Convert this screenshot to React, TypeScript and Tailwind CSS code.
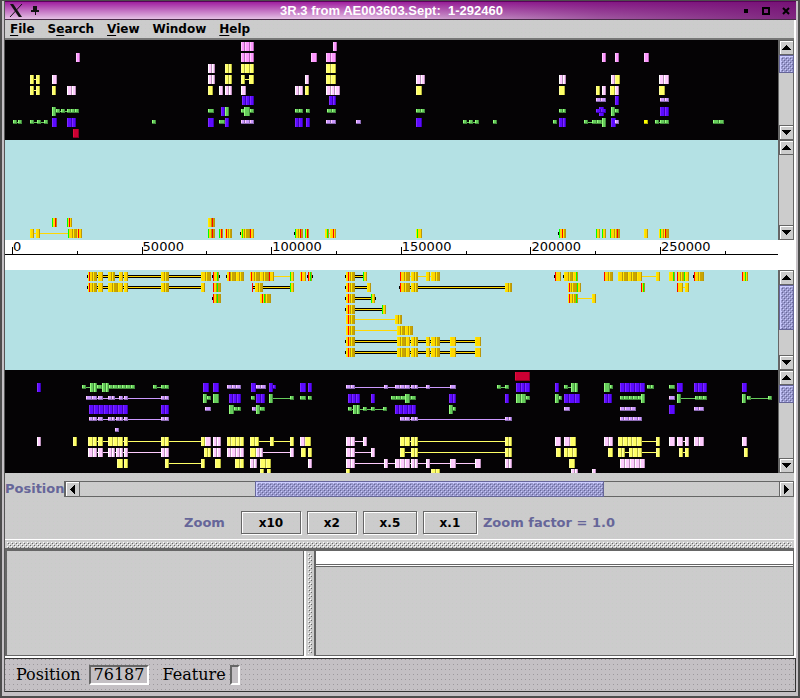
import React from "react";

type Tone = { base: string; light: string; dark: string; tail?: string };

const TONES: Record<string, Tone> = {
  h: { base: "#ff99ff", light: "#ffccff", dark: "#b566b5" },
  p: { base: "#ffccff", light: "#ffffff", dark: "#b98fb9" },
  y: { base: "#ffff66", light: "#ffff99", dark: "#b3b33c" },
  n: { base: "#66cc5c", light: "#99ff80", dark: "#438c3c" },
  v: { base: "#5c0aff", light: "#7f2bff", dark: "#3c00b8" },
  l: { base: "#cc99ff", light: "#ffccff", dark: "#8c6bb3" },
  r: { base: "#cc0033", light: "#e0103c", dark: "#8c0024" },
  s: { base: "#ffff00", light: "#ffff00", dark: "#b3b300" },
  o: { base: "#ffd700", light: "#ffee00", dark: "#b8960b", tail: "#c9a400" },
};

/*
 * A row is [centre y, features]. Feature tokens:
 *   Y30+4   tall exon, tone y        y30+4   short exon
 *   -y30+10 intron line              b97+10  outlined intron line
 *   k87     end marker               !r88    start / stop codon stripe
 */
type Row = [number, string];

const FORWARD_HITS: Row[] = [
  [46, "H241+13 H333+4"],
  [57, "H76+4 H241+13 H311+6 H326+10 H602+4 H615+4 H644+5"],
  [68, "P208+7 Y225+7 Y241+13 Y326+10"],
  [79, "-y30+10 Y30+4 Y36+4 P52+5 P208+7 Y225+7 -y241+13 Y241+4 Y249+5 P305+4 Y326+10 P416+9 P559+7 P611+4 Y615+5 P659+10"],
  [90, "-y30+10 Y30+4 Y36+4 Y52+4 P67+9 Y208+5 P219+4 P225+7 P241+5 P295+8 Y305+4 P326+14 Y416+6 Y559+6 Y596+4 P602+4 Y610+5 P615+4 Y659+6"],
  [100, "V242+12 V329+7 l596+10 V615+4 l660+9"],
  [111, "-n52+26 N52+4 n56+4 n61+4 n67+12 n208+6 V221+4 N225+4 n241+13 N244+6 n295+8 n306+4 n327+9 n416+9 n559+7 V599+5 v596+10 N611+4 n615+4 V660+9"],
  [122, "-n13+8 n13+4 n18+4 -n30+18 n30+4 n37+4 n44+4 V52+5 V67+9 n152+4 V208+6 n219+6 V225+4 l241+13 V295+8 V306+4 l326+10 l356+5 V416+6 -n463+16 n463+4 n469+4 n475+4 n493+4 n553+4 V559+7 -n584+20 n584+4 n592+10 N602+4 V611+5 l615+4 s644+4 -n655+10 n655+4 n660+9 n713+11"],
  [133, "R73+6"],
];

const FORWARD_GENES: Row[] = [
  [222, "O52+5 !g52 !r55 O67+5 !g67 !r69 O208+7 !r212"],
  [233, "-o34+34 O30+4 O36+4 O68+9 !g68 O77+5 !r78 O208+7 !g208 !r212 O219+4 !g219 !r221 O225+7 !r226 k240 O241+13 !g242 !r250 k294 O295+8 !g295 !r300 O305+4 !g305 !r307 -o325+10 O325+4 !g327 O330+6 !r333 O416+6 !g417 k558 O559+7 !g559 !r562 O596+4 !g596 O602+4 !g602 O610+10 !g610 !r617 O644+4 O659+10 !g660 !r665"],
];

const REVERSE_GENES: Row[] = [
  [276, "k87 b97+108 O88+9 !r89 O98+5 O108+7 O119+4 O124+4 O161+8 O201+10 k212 O213+6 !r213 !g217 k219 k226 O227+17 !r229 O250+24 !r251 !r269 -o274+16 O290+4 !g290 O300+6 !r301 k307 O308+4 !r308 !g310 k312 k345 O346+9 !r348 b355+8 O363+4 !g363 -o400+40 O400+10 !r400 O411+7 O426+4 O431+9 k554 O555+6 !r555 k563 O564+14 !g576 O604+9 !r604 O618+24 -o642+14 O656+4 O669+6 !g673 O677+12 !r677 !g684 k693 O694+10 !r694 O742+6 !r742 !g745"],
  [287, "k87 b97+104 O88+9 !r89 O98+5 O108+15 O124+4 O161+8 O201+4 O213+8 !r213 !g217 b253+37 O255+8 !r252 O290+4 !g290 k345 O346+9 !r348 b355+12 O367+4 k399 b410+95 O400+10 !r400 O411+7 O505+7 O568+13 !r569 !g577 O641+4 !r641 !g643 -o677+10 O677+6 !r677 O685+4"],
  [298, "k212 O213+8 !r213 !g217 O260+11 !r262 !g264 k345 O346+9 !r348 b355+16 O371+4 !g371 k375 O568+10 !r569 !g576 -o578+14 O592+4"],
  [309, "k345 O346+9 !r348 b355+27 O382+4 !g382"],
  [319, "O346+9 !r348 -o355+40 O395+7"],
  [330, "O346+9 !r348 -o355+42 O397+8 O405+8"],
  [341, "k345 O346+9 !r348 b355+120 O397+13 O411+7 O426+4 O431+9 O450+6 O475+6"],
  [352, "k345 O346+9 !r348 b355+120 O397+13 O411+7 O426+4 O431+9 O450+6 O475+6"],
];

const REVERSE_HITS: Row[] = [
  [376, "R515+15"],
  [387, "V37+4 -n82+50 n82+4 N90+7 n97+5 N102+7 n109+26 -n153+12 n153+4 n161+8 V203+6 V213+6 l227+14 V251+5 l256+10 V269+4 v273+3 V300+6 V308+4 -l346+109 l346+9 l384+4 l395+15 l411+7 l426+4 l450+6 -n497+10 n497+4 n505+4 V516+14 V555+4 -n564+8 n564+4 N571+7 N604+6 n610+3 V620+25 n647+7 n669+6 V677+6 V694+13 V742+5"],
  [398, "-l86+80 l86+11 l98+5 l108+7 l119+4 l124+4 l161+8 N203+4 n207+4 N213+6 V229+12 n251+4 V256+9 -n273+18 N269+4 n290+4 n300+6 n308+4 V348+12 V371+4 n391+25 N405+5 V449+7 V505+4 N516+10 n526+4 N555+4 n559+3 V564+16 V604+8 n620+22 N641+4 l669+6 -n681+16 N677+4 n695+12 -n747+22 N742+4 n747+4 n768+4"],
  [409, "V89+39 V161+8 l205+6 N229+5 n234+7 l252+4 N256+4 n260+5 -n348+37 n348+4 N353+7 n363+4 n371+4 n383+4 V395+21 N449+4 n453+3 l564+6 l620+16 V669+6 l694+10"],
  [419, "-l89+74 l89+8 l98+5 l108+7 l116+7 l124+4 l161+8 -l400+106 l400+10 l411+7 l505+7 l620+22"],
  [430, "l115+4"],
  [441, "P37+4 Y73+4 -y88+115 Y88+9 Y98+5 Y108+15 Y124+4 Y161+8 Y201+4 P205+6 P213+8 Y227+17 -y255+36 Y250+9 Y270+4 Y290+4 P300+5 Y305+6 -p355+10 P346+9 P363+4 -y400+106 Y400+10 Y411+7 Y505+7 P555+6 P564+6 Y570+6 P604+9 -y640+18 Y618+24 Y656+4 P669+6 -p677+10 P677+6 P685+4 P694+10 P742+5"],
  [452, "-p88+74 P88+9 P98+5 P108+7 P116+7 P124+4 P161+8 Y204+7 P213+8 P227+17 -p256+36 Y250+6 P256+7 P290+4 Y301+5 Y308+4 -p355+18 P346+9 P371+4 -y400+106 Y400+5 Y411+7 Y505+7 Y556+5 Y564+13 Y608+5 -y618+40 Y618+7 Y629+13 Y656+4 -y679+8 Y679+4 Y685+4 Y744+4"],
  [463, "Y117+6 Y124+4 -y165+38 Y165+4 Y201+4 Y215+6 Y235+9 P250+7 Y260+11 P308+4 -p346+132 P346+9 P384+4 P395+15 P411+7 P426+4 P450+6 P475+6 P505+7 Y569+6 P620+25"],
  [473, "Y260+4 Y267+4 Y346+4 Y431+9 P571+7 P592+4"],
];

function Exon({ x, y, w, h, tone }: { x: number; y: number; w: number; h: number; tone: Tone }) {
  const parts = tone === TONES.r ? 1 : Math.max(1, Math.round(w / 4.6));
  const cuts = Array.from({ length: parts + 1 }, (_, i) => x + Math.round((w * i) / parts));
  return (
    <g>
      <rect x={x} y={y} width={w} height={h} fill={tone.base} />
      {cuts.slice(0, -1).map((left, i) => (
        <g key={left}>
          {tone.tail && i % 2 === 1 && (
            <rect x={left} y={y} width={cuts[i + 1] - left} height={h} fill={tone.tail} />
          )}
          <rect x={left} y={y} width={1} height={h} fill={tone.light} />
          <rect x={cuts[i + 1] - 1} y={y} width={1} height={h} fill={tone.dark} />
        </g>
      ))}
      {(h < 6 || tone === TONES.r) && <rect x={x} y={y + h - 1} width={w} height={1} fill={tone.dark} />}
    </g>
  );
}

function Feature({ token, cy }: { token: string; cy: number }) {
  const match = /^([-!]?)([a-zA-Z])(\d+)(?:\+(\d+))?$/.exec(token);
  if (!match) return null;
  const [, prefix, letter, xs, ws] = match;
  const x = Number(xs);
  const w = Number(ws ?? 1);
  if (prefix === "!") {
    return <rect x={x} y={cy - 4} width={1} height={9} fill={letter === "r" ? "#ff0000" : "#00ff00"} />;
  }
  if (prefix === "-") {
    return <rect x={x} y={cy} width={w} height={1} fill={TONES[letter].base} />;
  }
  if (letter === "k") return <rect x={x} y={cy - 1} width={1} height={3} fill="#000" />;
  if (letter === "b") {
    return (
      <g>
        <rect x={x} y={cy - 1} width={w} height={3} fill="#000" />
        <rect x={x} y={cy} width={w} height={1} fill="#ffd700" />
      </g>
    );
  }
  const tall = letter === letter.toUpperCase();
  const h = tall ? 9 : 4;
  return <Exon x={x} y={tall ? cy - 4 : cy - 2} w={w} h={h} tone={TONES[letter.toLowerCase()]} />;
}

function Arrow({ dir }: { dir: "up" | "down" | "left" | "right" }) {
  const points = {
    up: "0,7 4,2 5,2 9,7",
    down: "0,2 9,2 5,7 4,7",
    left: "7,0 2,4 2,5 7,9",
    right: "2,0 7,4 7,5 2,9",
  }[dir];
  return (
    <svg viewBox="0 0 9 9" className="size-[9px] shrink-0" shapeRendering="crispEdges" aria-hidden="true">
      <polygon points={points} fill="#000" />
    </svg>
  );
}

const arrowButton =
  "flex size-[15px] shrink-0 items-center justify-center border border-[#666666] bg-[#cccccc] shadow-[inset_1px_1px_0_#ffffff]";
const thumbTexture =
  "border border-[#666699] bg-[#9999cc] bg-[conic-gradient(at_1px_1px,transparent_75%,#ccccff_0),conic-gradient(at_1px_1px,transparent_75%,#666699_0),conic-gradient(at_1px_1px,transparent_75%,#ccccff_0),conic-gradient(at_1px_1px,transparent_75%,#666699_0)] bg-[size:4px_4px] bg-[position:1px_1px,2px_2px,3px_3px,4px_4px] shadow-[inset_1px_1px_0_#ccccff]";

function VerticalScroll({ name, thumb }: { name: string; thumb?: string }) {
  return (
    <div className="flex w-4 shrink-0 flex-col border-l border-[#666666] bg-[#cccccc]">
      <button aria-label={`${name} up`} className={arrowButton}>
        <Arrow dir="up" />
      </button>
      <div className="flex-1 border-r border-[#666666]">
        {thumb && <div className={`${thumb} w-[15px] ${thumbTexture}`} />}
      </div>
      <button aria-label={`${name} down`} className={arrowButton}>
        <Arrow dir="down" />
      </button>
    </div>
  );
}

type TrackProps = { name: string; top: number; height: number; rows: Row[]; look: string; thumb?: string };

function TrackPanel({ name, top, height, rows, look, thumb }: TrackProps) {
  return (
    <section aria-label={name} className="flex">
      <svg
        viewBox={`5 ${top} 773 ${height}`}
        preserveAspectRatio="none"
        shapeRendering="crispEdges"
        className={`min-w-0 flex-1 ${look}`}
      >
        {rows.map(([cy, tokens]) =>
          tokens.split(" ").map((token, i) => <Feature key={`${cy}-${i}`} token={token} cy={cy} />),
        )}
      </svg>
      <VerticalScroll name={name} thumb={thumb} />
    </section>
  );
}

function Ruler() {
  const at = (base: number) => `${((7 + base * 0.002592) / 773) * 100}%`;
  const majors = [0, 50000, 100000, 150000, 200000, 250000];
  return (
    <div className="flex bg-white pr-4">
      <svg className="h-[30px] min-w-0 flex-1" shapeRendering="crispEdges">
        <line x1="0" x2="100%" y1="14.5" y2="14.5" stroke="#000" />
        {majors.map((base) => (
          <g key={base}>
            <rect x={at(base)} y="7" width="1" height="7" />
            <rect x={at(base + 25000)} y="11" width="1" height="3" />
            <text x={at(base)} y="11" dx="1" className="font-['DejaVu_Sans',sans-serif] text-[13px]">
              {base}
            </text>
          </g>
        ))}
      </svg>
    </div>
  );
}

const MENUS = [
  ["", "F", "ile"],
  ["S", "e", "arch"],
  ["", "V", "iew"],
  ["Window", "", ""],
  ["", "H", "elp"],
];

const ZOOMS = [
  { label: "x10", width: "w-[60px]" },
  { label: "x2", width: "w-[50px]" },
  { label: "x.5", width: "w-[54px]" },
  { label: "x.1", width: "w-[54px]" },
];

const dither =
  "bg-[#cccccc] bg-[conic-gradient(at_1px_1px,transparent_75%,#c8cbc8_0),conic-gradient(at_1px_1px,transparent_75%,#d0c8d0_0)] bg-[size:4px_4px,7px_5px]";
const grip =
  "bg-[#cccccc] bg-[conic-gradient(at_1px_1px,transparent_75%,#ffffff_0),conic-gradient(at_1px_1px,transparent_75%,#666666_0),conic-gradient(at_1px_1px,transparent_75%,#ffffff_0),conic-gradient(at_1px_1px,transparent_75%,#666666_0)] bg-[size:4px_4px] bg-[position:0px_0px,1px_1px,2px_2px,3px_3px]";

function TitleBar() {
  return (
    <header className="flex h-[19px] items-center border-b border-t border-b-[#4a2a4a] border-t-[#5c005c] bg-[linear-gradient(to_right,transparent_45%,#72127299_75%,#701070dd),linear-gradient(#a020a0,#e4c0e4)] px-1 text-black">
      <svg viewBox="0 0 14 15" className="h-[15px] w-3.5" aria-hidden="true">
        <path d="M1 1h3.2l8.8 13H9.8z" fill="#111" />
        <path d="M13 1L1 14" stroke="#111" strokeWidth="1" />
      </svg>
      <svg viewBox="0 0 8 9" className="ml-2 h-[9px] w-2" shapeRendering="crispEdges" aria-hidden="true">
        <path d="M2 0h4v4h2v2H5v3H4V6H0V4h2z" fill="#111" />
      </svg>
      <h1 className="flex-1 whitespace-pre pl-1 text-center font-['Liberation_Sans',sans-serif] text-[13px] leading-4 font-bold text-white">
        {"3R.3 from AE003603.Sept:  1-292460"}
      </h1>
      <div className="flex items-center gap-2">
        <button aria-label="Minimize" className="flex size-3 items-center justify-center">
          <span className="size-1 bg-black" />
        </button>
        <button aria-label="Maximize" className="flex size-3 items-center justify-center">
          <span className="size-2 border-2 border-black" />
        </button>
        <button aria-label="Close" className="flex size-3 items-center justify-center">
          <svg viewBox="0 0 8 8" className="size-2">
            <path d="M1 1l6 6M7 1L1 7" stroke="#000" strokeWidth="2" />
          </svg>
        </button>
      </div>
    </header>
  );
}

export default function App() {
  return (
    <div className="border-x-2 border-b-2 border-t border-[#4d4d4d] bg-[#c4c0c4] pb-1 pl-0.5 pr-0.5 font-['DejaVu_Sans',sans-serif] text-xs text-black">
      <div className="border-l border-[#555555]">
        <TitleBar />
        <div className="border-r-2 border-white">
          <nav className={`flex h-5 items-center gap-[13px] border-b-2 border-[#777777] px-[5px] font-bold ${dither}`}>
            {MENUS.map(([before, key, after]) => (
              <button key={before + key} className="leading-4">
                {before}
                <span className="underline underline-offset-2">{key}</span>
                {after}
              </button>
            ))}
          </nav>

          <main>
            <TrackPanel name="Forward hits" top={40} height={100} rows={FORWARD_HITS} look="h-[100px] bg-[#050305]" thumb="h-[18px]" />
            <TrackPanel name="Forward genes" top={140} height={100} rows={FORWARD_GENES} look="h-[100px] bg-[#b4e1e4]" />
            <Ruler />
            <TrackPanel name="Reverse genes" top={270} height={100} rows={REVERSE_GENES} look="h-[100px] bg-[#b4e1e4]" thumb="h-[45px]" />
            <TrackPanel name="Reverse hits" top={370} height={103} rows={REVERSE_HITS} look="h-[103px] bg-[#050305]" thumb="h-[18px]" />
          </main>

          <div className={`border-b border-white ${dither}`}>
            <div className="flex items-center pt-2 text-[13px] leading-4 font-bold text-[#666699]">
              <span className="w-[59px] shrink-0">Position</span>
              <div className="flex h-4 flex-1 items-stretch border border-r-0 border-[#666666]">
                <button aria-label="Scroll left" className={arrowButton + " -my-px h-4"}>
                  <Arrow dir="left" />
                </button>
                <div className="flex flex-1">
                  <div className="w-1/4" />
                  <div className={`-my-px w-1/2 ${thumbTexture}`} />
                </div>
                <button aria-label="Scroll right" className={arrowButton + " -my-px h-4"}>
                  <Arrow dir="right" />
                </button>
              </div>
            </div>
            <div className="flex items-center justify-center gap-1.5 pb-[5px] pt-3.5 text-[13px] font-bold text-[#666699]">
              <span className="mr-2.5">Zoom</span>
              {ZOOMS.map(({ label, width }) => (
                <button
                  key={label}
                  className={`${width} h-[23px] border border-[#666666] text-xs text-black shadow-[inset_1px_1px_0_#ffffff,1px_1px_0_#ffffff]`}
                >
                  {label}
                </button>
              ))}
              <span>Zoom factor = 1.0</span>
            </div>
          </div>

          <div className={`h-2 border-x-2 border-t-2 border-[#cccccc] ${grip}`} />

          <div className="flex h-[110px] border-b-2 border-t-3 border-b-white border-t-[#666666]">
            <div className={`w-[301px] shrink-0 border-l-2 border-r-2 border-l-[#666666] border-r-white ${dither}`}>
              <div className="h-full border-b border-r border-[#666666]" />
            </div>
            <div className={`w-2 shrink-0 border-2 border-[#cccccc] ${grip}`} />
            <div className={`flex-1 border-l-2 border-[#666666] ${dither}`}>
              <div className="flex h-full flex-col border-b border-r border-[#666666]">
                <div className="h-3.5 border-b border-[#666666] bg-white" />
                <div className="h-0.5 border-b border-t border-b-[#666666] border-t-white" />
              </div>
            </div>
          </div>
        </div>

        <footer className="flex h-[34px] items-center border-y border-r border-[#333333] bg-[#c4c0c4] bg-[conic-gradient(at_1px_1px,transparent_75%,#9c989c_0)] bg-[size:4px_5px] pl-[11px] font-['DejaVu_Serif',serif] text-base leading-5">
          <label htmlFor="position">Position</label>
          <input
            id="position"
            readOnly
            value="76187"
            className="ml-2 h-5 w-[60px] border-2 border-b-white border-l-[#666666] border-r-white border-t-[#666666] bg-[#c4c0c4] px-[3px]"
          />
          <label htmlFor="feature" className="ml-3.5">
            Feature
          </label>
          <input
            id="feature"
            readOnly
            value=""
            className="ml-1 h-5 w-2.5 border-2 border-b-white border-l-[#666666] border-r-white border-t-[#666666] bg-[#c4c0c4]"
          />
        </footer>
      </div>
    </div>
  );
}
